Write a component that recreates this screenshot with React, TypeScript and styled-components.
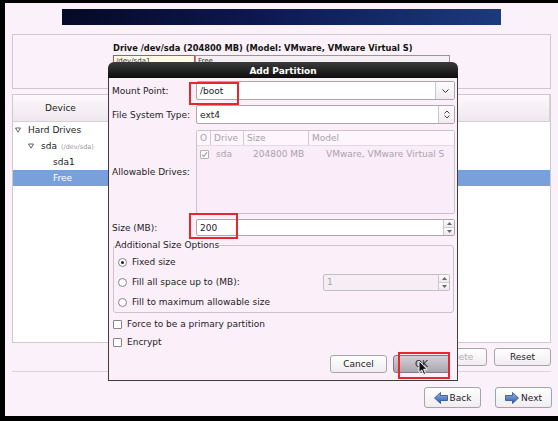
import React from "react";
import styled, { createGlobalStyle } from "styled-components";

const GlobalStyle = createGlobalStyle`
  html, body {
    margin: 0;
    padding: 0;
    background: #000;
  }
  body {
    font-family: "DejaVu Sans", "Liberation Sans", sans-serif;
    font-size: 9px;
    color: #1e1a1e;
  }
  * {
    box-sizing: border-box;
  }
`;

const Frame = styled.div`
  width: 558px;
  height: 421px;
  background: #000;
  padding: 3px 0 5px 5px;
`;

const Screen = styled.div`
  position: relative;
  height: 100%;
  background: #fbf1fa;
  display: flex;
  flex-direction: column;
  padding: 6px 0 0 7px;
`;

const Banner = styled.div`
  width: 439px;
  height: 16px;
  margin-left: 50px;
  background: linear-gradient(90deg, #060926 0%, #0d1850 45%, #1c3a7e 100%);
`;

const DrivePanel = styled.div`
  width: 539px;
  height: 55px;
  margin-top: 9px;
  border: 1px solid #cfc7ce;
  padding: 7px 0 0 100px;
`;

const DriveTitle = styled.div`
  font-weight: bold;
  font-size: 8.3px;
  line-height: 12px;
  color: #111;
`;

const DriveBar = styled.div`
  display: flex;
  margin-top: 1px;
  height: 22px;
`;

const DriveSegment = styled.div<{ $w: number; $active?: boolean }>`
  width: ${(p) => p.$w}px;
  height: 100%;
  border: 1px solid ${(p) => (p.$active ? "#e0454a" : "#9a939a")};
  background: ${(p) => (p.$active ? "#fffbe7" : "#f4f0f4")};
  font-size: 7px;
  padding: 1px 2px;
  color: #333;
`;

const DevicePanel = styled.div`
  width: 539px;
  height: 249px;
  margin-top: 5px;
  border: 1px solid #cfc7ce;
  background: #fff;
  display: flex;
  flex-direction: column;
`;

const TreeHeader = styled.div`
  display: flex;
  height: 27px;
  border-bottom: 1px solid #d6cfd5;
  background: linear-gradient(#fdf8fc, #efe7ee);
`;

const HeaderCell = styled.div<{ $w?: number }>`
  width: ${(p) => (p.$w ? `${p.$w}px` : "auto")};
  flex: ${(p) => (p.$w ? "none" : "1")};
  display: flex;
  align-items: center;
  justify-content: center;
  border-right: 1px solid #dcd4db;
  font-size: 9px;
  color: #222;
`;

const TreeBody = styled.div`
  padding-top: 0;
`;

const TreeRow = styled.div<{ $indent: number; $selected?: boolean }>`
  height: 16px;
  display: flex;
  align-items: center;
  padding-left: ${(p) => p.$indent}px;
  background: ${(p) => (p.$selected ? "#7aa0dc" : "transparent")};
  color: ${(p) => (p.$selected ? "#fff" : "#1e1a1e")};
`;

const Expander = styled.svg`
  width: 6px;
  height: 6px;
  margin-right: 7px;
  flex: none;
`;

const DevHint = styled.span`
  font-size: 6.5px;
  color: #9a949a;
  margin-left: 4px;
  margin-top: 1px;
`;

const ButtonRow = styled.div<{ $top: number; $gap: number; $width: number }>`
  display: flex;
  justify-content: flex-end;
  gap: ${(p) => p.$gap}px;
  width: ${(p) => p.$width}px;
  margin-top: ${(p) => p.$top}px;
`;

const Button = styled.div<{ $h?: number; $disabled?: boolean; $pressed?: boolean; $focus?: boolean }>`
  position: relative;
  width: 57px;
  height: ${(p) => p.$h || 18}px;
  display: flex;
  align-items: center;
  justify-content: center;
  gap: 2px;
  border: 1px solid ${(p) => (p.$focus ? "#8ea6c8" : p.$pressed ? "#7f7b84" : "#aaa2a9")};
  border-radius: 3px;
  background: ${(p) =>
    p.$pressed
      ? "linear-gradient(#d3cfd6, #a9a6af)"
      : "linear-gradient(#ffffff, #f1ecf0)"};
  color: ${(p) => (p.$disabled ? "#b4aeb4" : "#1e1a1e")};
  font-size: 9px;
`;

const Separator = styled.div`
  width: 539px;
  height: 1px;
  margin-top: 5px;
  background: #dcd4db;
`;

/* dialog */

const Dialog = styled.div`
  position: absolute;
  left: 103px;
  top: 59px;
  width: 350px;
  height: 319px;
  display: flex;
  flex-direction: column;
`;

const TitleBar = styled.div`
  height: 16px;
  border-radius: 6px 6px 0 0;
  background: linear-gradient(#3b3b3b, #0d0d0d);
  color: #fff;
  font-weight: bold;
  font-size: 9px;
  display: flex;
  align-items: center;
  justify-content: center;
  padding-top: 1px;
`;

const DialogBody = styled.div`
  flex: 1;
  background: #fbf0fa;
  border: 1px solid #3d3d3d;
  border-top: none;
  padding: 3px 2px 0 3px;
  display: flex;
  flex-direction: column;
`;

const FormGrid = styled.div`
  display: grid;
  grid-template-columns: 84px 259px;
  row-gap: 5px;
  align-items: center;
`;

const Label = styled.div`
  font-size: 9px;
  color: #1e1a1e;
`;

const Field = styled.div<{ $h: number; $mt?: number }>`
  position: relative;
  height: ${(p) => p.$h}px;
  margin-top: ${(p) => p.$mt || 0}px;
  display: flex;
  background: #fff;
  border: 1px solid #aea6ad;
  border-radius: 2px;
`;

const FieldText = styled.div<{ $muted?: boolean }>`
  flex: 1;
  display: flex;
  align-items: center;
  padding-left: 3px;
  font-size: 9px;
  color: ${(p) => (p.$muted ? "#aaa3aa" : "#1e1a1e")};
`;

const DropButton = styled.div<{ $w: number }>`
  width: ${(p) => p.$w}px;
  border-left: 1px solid #cdc5cc;
  display: flex;
  align-items: center;
  justify-content: center;
  background: linear-gradient(#fdfbfd, #f1ebf0);
`;

const SpinButtons = styled.div`
  width: 11px;
  display: flex;
  flex-direction: column;
  border-left: 1px solid #cdc5cc;
`;

const SpinHalf = styled.div<{ $bottom?: boolean }>`
  flex: 1;
  display: flex;
  align-items: center;
  justify-content: center;
  border-top: ${(p) => (p.$bottom ? "1px solid #d4ccd3" : "none")};
  background: linear-gradient(#fdfbfd, #eee8ed);
`;

const Annotation = styled.div<{ $l: number; $t: number; $w: number; $h: number }>`
  position: absolute;
  left: ${(p) => p.$l}px;
  top: ${(p) => p.$t}px;
  width: ${(p) => p.$w}px;
  height: ${(p) => p.$h}px;
  border: 2px solid #e8262e;
  pointer-events: none;
`;

const DriveTable = styled.div`
  height: 84px;
  margin-top: 1px;
  border: 1px solid #cbc3ca;
  border-radius: 2px;
  background: #faedf9;
  color: #aaa2aa;
`;

const TableRow = styled.div<{ $header?: boolean }>`
  display: grid;
  grid-template-columns: 14px 33px 65px 1fr;
  height: ${(p) => (p.$header ? 15 : 16)}px;
  align-items: center;
  border-bottom: ${(p) => (p.$header ? "1px solid #e3dbe2" : "none")};
  background: ${(p) => (p.$header ? "#fdf6fc" : "transparent")};
`;

const TableCell = styled.div<{ $sep?: boolean; $pl?: number }>`
  height: 100%;
  display: flex;
  align-items: center;
  padding-left: ${(p) => p.$pl ?? 3}px;
  border-right: ${(p) => (p.$sep ? "1px solid #d2cad1" : "none")};
  white-space: nowrap;
  overflow: hidden;
`;

const Group = styled.fieldset`
  margin: 3px 0 0 1px;
  width: 341px;
  padding: 1px 3px 0 1px;
  border: 1px solid #cbc3ca;
  border-radius: 3px;
`;

const Legend = styled.legend`
  padding: 0;
  margin-left: 0;
  font-size: 9px;
  line-height: 12px;
  color: #1e1a1e;
`;

const OptionRow = styled.div<{ $h: number; $indent?: number; $top?: number }>`
  height: ${(p) => p.$h}px;
  margin-top: ${(p) => p.$top || 0}px;
  display: flex;
  align-items: center;
  padding-left: ${(p) => p.$indent || 0}px;
`;

const Radio = styled.span<{ $checked?: boolean }>`
  width: 9px;
  height: 9px;
  border-radius: 50%;
  border: 1px solid #8a838a;
  background: #fff;
  margin-right: 5px;
  display: flex;
  align-items: center;
  justify-content: center;
  flex: none;
  &::after {
    content: "";
    width: 3px;
    height: 3px;
    border-radius: 50%;
    background: ${(p) => (p.$checked ? "#222" : "transparent")};
  }
`;

const CheckBox = styled.span<{ $muted?: boolean }>`
  width: 9px;
  height: 9px;
  border: 1px solid ${(p) => (p.$muted ? "#b6afb6" : "#8a838a")};
  border-radius: 1px;
  background: #fff;
  margin-right: 5px;
  flex: none;
  display: flex;
  align-items: center;
  justify-content: center;
`;

const SmallSpin = styled(Field)`
  width: 127px;
  margin-left: auto;
  background: #f6eef5;
  border-color: #c6bec5;
`;

const DialogButtons = styled(ButtonRow)`
  margin-right: 5px;
  align-self: flex-end;
  width: auto;
`;

const Cursor = styled.svg`
  position: absolute;
  left: 24px;
  top: 4px;
  width: 10px;
  height: 16px;
`;

const Chevron = ({ up }: { up?: boolean }) => (
  <svg width="7" height="4" viewBox="0 0 7 4">
    <path d={up ? "M0.5 3.5 L3.5 0.5 L6.5 3.5" : "M0.5 0.5 L3.5 3.5 L6.5 0.5"} fill="none" stroke="#333" strokeWidth="1" />
  </svg>
);

const UpDown = () => (
  <svg width="6" height="9" viewBox="0 0 6 9">
    <path d="M0.5 3.5 L3 1 L5.5 3.5 M0.5 5.5 L3 8 L5.5 5.5" fill="none" stroke="#444" strokeWidth="1" />
  </svg>
);

const Tick = ({ color }: { color: string }) => (
  <svg width="7" height="7" viewBox="0 0 7 7">
    <path d="M1 3.6 L2.8 5.5 L6 1.2" fill="none" stroke={color} strokeWidth="1.2" />
  </svg>
);

const TinyArrow = ({ up }: { up?: boolean }) => (
  <svg width="5" height="3" viewBox="0 0 5 3">
    <path d={up ? "M0 3 L2.5 0 L5 3Z" : "M0 0 L2.5 3 L5 0Z"} fill="#666" />
  </svg>
);

const Triangle = () => (
  <Expander viewBox="0 0 6 6">
    <path d="M0.5 1 L5.5 1 L3 5.2 Z" fill="none" stroke="#555" strokeWidth="0.9" />
  </Expander>
);

const NavArrow = ({ dir }: { dir: "left" | "right" }) => (
  <svg width="14" height="12" viewBox="0 0 14 12">
    <defs>
      <linearGradient id={`nav-${dir}`} x1="0" y1="0" x2="0" y2="1">
        <stop offset="0" stopColor="#8fb3e6" />
        <stop offset="1" stopColor="#2c5da8" />
      </linearGradient>
    </defs>
    <path
      d={dir === "left" ? "M0.5 6 L6.5 0.5 L6.5 3.5 L13.5 3.5 L13.5 8.5 L6.5 8.5 L6.5 11.5 Z" : "M13.5 6 L7.5 0.5 L7.5 3.5 L0.5 3.5 L0.5 8.5 L7.5 8.5 L7.5 11.5 Z"}
      fill={`url(#nav-${dir})`}
      stroke="#244d8f"
      strokeWidth="0.8"
    />
  </svg>
);

export default function App() {
  return (
    <>
      <GlobalStyle />
      <Frame>
        <Screen>
          <Banner />

          <DrivePanel>
            <DriveTitle>Drive /dev/sda (204800 MB) (Model: VMware, VMware Virtual S)</DriveTitle>
            <DriveBar>
              <DriveSegment $w={82} $active>/dev/sda1</DriveSegment>
              <DriveSegment $w={255}>Free</DriveSegment>
            </DriveBar>
          </DrivePanel>

          <DevicePanel>
            <TreeHeader>
              <HeaderCell $w={96}>Device</HeaderCell>
              <HeaderCell />
            </TreeHeader>
            <TreeBody>
              <TreeRow $indent={2}>
                <Triangle />
                Hard Drives
              </TreeRow>
              <TreeRow $indent={15}>
                <Triangle />
                sda<DevHint>(/dev/sda)</DevHint>
              </TreeRow>
              <TreeRow $indent={40}>sda1</TreeRow>
              <TreeRow $indent={40} $selected>
                Free
              </TreeRow>
            </TreeBody>
          </DevicePanel>

          <ButtonRow $top={5} $gap={7} $width={539}>
            <Button $disabled>Delete</Button>
            <Button>Reset</Button>
          </ButtonRow>

          <Separator />

          <ButtonRow $top={15} $gap={14} $width={540}>
            <Button $h={21}>
              <NavArrow dir="left" />
              Back
            </Button>
            <Button $h={21} $focus>
              <NavArrow dir="right" />
              Next
            </Button>
          </ButtonRow>

          <Dialog>
            <TitleBar>Add Partition</TitleBar>
            <DialogBody>
              <FormGrid>
                <Label>Mount Point:</Label>
                <Field $h={19}>
                  <FieldText>/boot</FieldText>
                  <DropButton $w={19}>
                    <Chevron />
                  </DropButton>
                  <Annotation $l={-8} $t={0} $w={50} $h={23} />
                </Field>

                <Label>File System Type:</Label>
                <Field $h={19}>
                  <FieldText>ext4</FieldText>
                  <DropButton $w={16}>
                    <UpDown />
                  </DropButton>
                </Field>

                <Label>Allowable Drives:</Label>
                <DriveTable>
                  <TableRow $header>
                    <TableCell $sep $pl={3}>O</TableCell>
                    <TableCell $sep>Drive</TableCell>
                    <TableCell $sep>Size</TableCell>
                    <TableCell>Model</TableCell>
                  </TableRow>
                  <TableRow>
                    <TableCell $pl={3}>
                      <CheckBox $muted>
                        <Tick color="#a9a2a9" />
                      </CheckBox>
                    </TableCell>
                    <TableCell $pl={5}>sda</TableCell>
                    <TableCell $pl={9}>204800 MB</TableCell>
                    <TableCell $pl={17}>VMware, VMware Virtual S</TableCell>
                  </TableRow>
                </DriveTable>

                <Label>Size (MB):</Label>
                <Field $h={17}>
                  <FieldText>200</FieldText>
                  <SpinButtons>
                    <SpinHalf>
                      <TinyArrow up />
                    </SpinHalf>
                    <SpinHalf $bottom>
                      <TinyArrow />
                    </SpinHalf>
                  </SpinButtons>
                  <Annotation $l={-8} $t={-7} $w={49} $h={26} />
                </Field>
              </FormGrid>

              <Group>
                <Legend>Additional Size Options</Legend>
                <OptionRow $h={20} $indent={3}>
                  <Radio $checked />
                  Fixed size
                </OptionRow>
                <OptionRow $h={20} $indent={3}>
                  <Radio />
                  Fill all space up to (MB):
                  <SmallSpin $h={17}>
                    <FieldText $muted>1</FieldText>
                    <SpinButtons>
                      <SpinHalf>
                        <TinyArrow up />
                      </SpinHalf>
                      <SpinHalf $bottom>
                        <TinyArrow />
                      </SpinHalf>
                    </SpinButtons>
                  </SmallSpin>
                </OptionRow>
                <OptionRow $h={20} $indent={3}>
                  <Radio />
                  Fill to maximum allowable size
                </OptionRow>
              </Group>

              <OptionRow $h={18} $indent={1} $top={2}>
                <CheckBox />
                Force to be a primary partition
              </OptionRow>
              <OptionRow $h={18} $indent={1}>
                <CheckBox />
                Encrypt
              </OptionRow>

              <DialogButtons $top={4} $gap={6} $width={120}>
                <Button>Cancel</Button>
                <Button $pressed>
                  OK
                  <Annotation $l={4} $t={-4} $w={52} $h={27} />
                  <Cursor viewBox="0 0 10 16">
                    <path d="M1 1 L1 12.5 L3.8 10 L5.8 14.6 L7.6 13.8 L5.6 9.3 L9 9.3 Z" fill="#111" stroke="#fff" strokeWidth="0.9" />
                  </Cursor>
                </Button>
              </DialogButtons>
            </DialogBody>
          </Dialog>
        </Screen>
      </Frame>
    </>
  );
}
